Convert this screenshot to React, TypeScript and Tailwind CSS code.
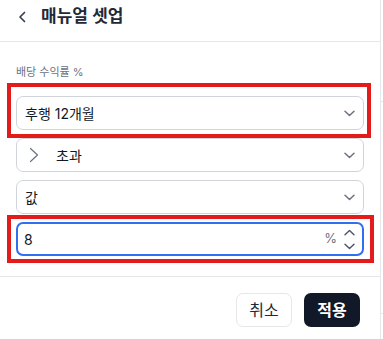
import React from "react";

const ChevronDown = () => (
  <svg width="11" height="7" viewBox="0 0 11 7" fill="none">
    <path d="M1 1.2 5.5 5.5 10 1.2" stroke="#6b7280" strokeWidth="1.5" strokeLinecap="round" strokeLinejoin="round" />
  </svg>
);

const ChevronUpSmall = () => (
  <svg width="11" height="7" viewBox="0 0 11 7" fill="none">
    <path d="M1 5.8 5.5 1.5 10 5.8" stroke="#4b5563" strokeWidth="1.4" strokeLinecap="round" strokeLinejoin="round" />
  </svg>
);

const ChevronDownSmall = () => (
  <svg width="11" height="7" viewBox="0 0 11 7" fill="none">
    <path d="M1 1.2 5.5 5.5 10 1.2" stroke="#4b5563" strokeWidth="1.4" strokeLinecap="round" strokeLinejoin="round" />
  </svg>
);

export default function App() {
  const font = { fontFamily: 'Inter, "Noto Sans CJK KR", sans-serif' };
  return (
    <div className="relative flex w-[383px] h-[339px] bg-white overflow-hidden" style={font}>
      <div className="flex flex-col w-[381px] h-[339px] border-r border-[#e5e7eb] bg-white">
        {/* header */}
        <div className="flex items-center h-[42px] pb-[8px] pl-[18px] gap-[14px] border-b border-[#e5e7eb]">
          <svg width="9" height="12" viewBox="0 0 9 12" fill="none">
            <path d="M6.5 1.5 2 6l4.5 4.5" stroke="#374151" strokeWidth="1.7" strokeLinecap="round" strokeLinejoin="round" />
          </svg>
          <span className="text-[17px] font-semibold text-[#1f2937] leading-none">매뉴얼 셋업</span>
        </div>
        {/* body */}
        <div className="flex flex-col px-[16px] pt-[22px] pb-[20px]">
          <div className="text-[11px] leading-[16px] text-[#6b7280] mb-[16px]">배당 수익률 %</div>
          <div className="flex flex-col gap-[8px]">
            <div className="flex items-center justify-between h-[34px] border border-[#d1d5db] rounded-[7px] pl-[8px] pr-[8px]">
              <span className="text-[14px] text-[#111827]">후행 12개월</span>
              <ChevronDown />
            </div>
            <div className="flex items-center justify-between h-[34px] border border-[#d1d5db] rounded-[7px] pl-[12px] pr-[8px]">
              <div className="flex items-center gap-[17px]">
                <svg width="10" height="16" viewBox="0 0 10 16" fill="none">
                  <path d="M1.5 1.5 8.5 8l-7 6.5" stroke="#6b7280" strokeWidth="1.2" strokeLinecap="round" strokeLinejoin="round" />
                </svg>
                <span className="text-[14px] text-[#111827]">초과</span>
              </div>
              <ChevronDown />
            </div>
            <div className="flex items-center justify-between h-[34px] border border-[#d1d5db] rounded-[7px] pl-[8px] pr-[8px]">
              <span className="text-[14px] text-[#111827]">값</span>
              <ChevronDown />
            </div>
            <div className="flex items-center justify-between h-[34px] border-2 border-[#2f6ff0] rounded-[7px] pl-[6px] pr-[7px]">
              <span className="text-[14px] text-[#111827]">8</span>
              <div className="flex items-center gap-[7px]">
                <span className="text-[13px] text-[#6b7280]">%</span>
                <div className="flex flex-col gap-[7px]">
                  <ChevronUpSmall />
                  <ChevronDownSmall />
                </div>
              </div>
            </div>
          </div>
        </div>
        {/* footer */}
        <div className="flex justify-end gap-[12px] border-t border-[#e5e7eb] pt-[16px] pr-[20px]">
          <button className="w-[56px] h-[34px] border border-[#e5e7eb] rounded-[7px] text-[16px] text-[#1f2937] bg-white">취소</button>
          <button className="w-[56px] h-[34px] rounded-[7px] text-[16px] font-semibold text-white bg-[#111827]">적용</button>
        </div>
      </div>
      {/* outside area */}
      <div className="flex flex-col flex-1">
        <div className="h-[101px]" />
        <div className="border-t border-[#e5e7eb] h-[212px]" />
        <div className="border-t border-[#e5e7eb]" />
      </div>
      {/* red annotation boxes */}
      <div className="absolute left-[7px] top-[83px] w-[364px] h-[55px] border-[4px] border-[#e31b1b] pointer-events-none" />
      <div className="absolute left-[7px] top-[215px] w-[367px] h-[48px] border-[4px] border-[#e31b1b] pointer-events-none" />
    </div>
  );
}
